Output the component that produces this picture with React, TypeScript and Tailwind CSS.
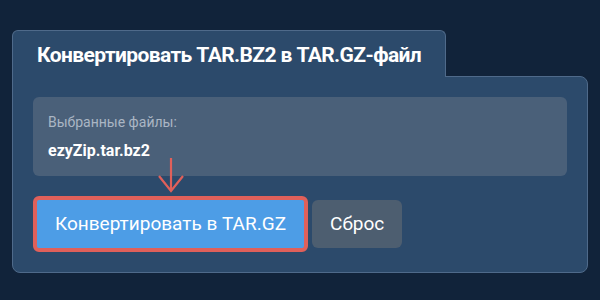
export default function App() {
  return (
    <div className="w-[600px] h-[300px] bg-[#11233a] pt-[30px] px-3" style={{ fontFamily: 'Roboto, "Liberation Sans", sans-serif' }}>
      <div className="relative z-10 -mb-px w-[434px] h-[47px] bg-[#2c4a6b] border border-b-0 border-[#4f6a8a] rounded-t-md flex items-center pl-6 pt-1">
        <span className="text-white font-bold text-[21px] tracking-[-0.6px]">Конвертировать TAR.BZ2 в TAR.GZ-файл</span>
      </div>
      <div className="w-[576px] bg-[#2c4a6b] border border-[#4f6a8a] rounded-lg rounded-tl-none px-5 pt-5 pb-5">
        <div className="relative h-[79px] bg-[#4a6079] rounded-md pl-[15px] pt-[17px]">
          <div className="text-[14px] text-[#aab6c4] leading-4">Выбранные файлы:</div>
          <div className="mt-[11px] text-[16px] font-bold text-white leading-5">ezyZip.tar.bz2</div>
          <svg className="absolute left-[123px] top-[60px]" width="30" height="36" viewBox="0 0 30 36" fill="none" stroke="#e0605a" strokeWidth="2.2">
            <path d="M15 1 V34" />
            <path d="M3 19 L15 34 L27 19" />
          </svg>
        </div>
        <div className="mt-5 flex items-center gap-1">
          <button className="h-[56px] px-[18px] bg-[#4d9de6] border-4 border-[#e0605a] rounded-md text-white text-[19px]">Конвертировать в TAR.GZ</button>
          <button className="h-[48px] px-[18px] bg-[#4d5e70] rounded-md text-white text-[19px]">Сброс</button>
        </div>
      </div>
    </div>
  );
}
